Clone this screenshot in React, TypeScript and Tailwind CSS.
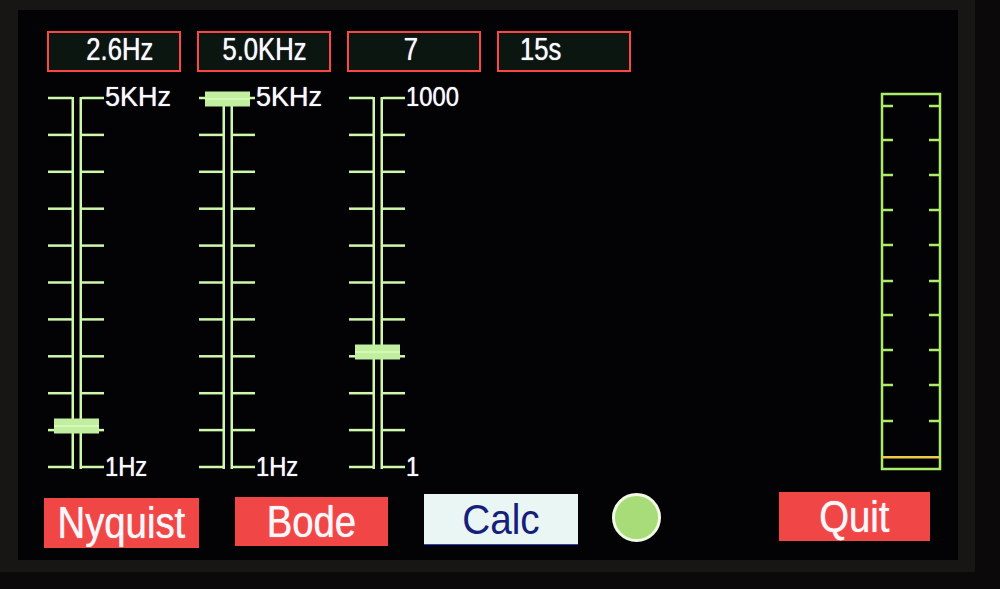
import React from "react";

const FONT = { fontFamily: '"Liberation Sans", Arial, sans-serif' };

function ValueBox({ text, pad }: { text: string; pad: string }) {
  return (
    <div
      className={`w-[134px] h-[41px] border-2 border-[#ff4646] bg-[#0c1611] flex items-center pb-[5px] ${pad}`}
    >
      <span className="inline-block text-[32px] leading-none text-[#f8f8ff] scale-x-[0.8] origin-center [text-shadow:0_0_1px_#ffffff]">
        {text}
      </span>
    </div>
  );
}

function Slider({
  top,
  bottom,
  thumbY,
  topWide,
}: {
  top: string;
  bottom: string;
  thumbY: number;
  topWide?: boolean;
}) {
  const ticks = Array.from({ length: 11 }, (_, i) => 12 + i * 36.9);
  const c = "#cef8ac";
  return (
    <div className="flex h-[392px]">
      <svg width="56" height="392" className="shrink-0">
        {ticks.map((y, i) => (
          <g key={i}>
            <rect x="0" y={y - 1.25} width="24" height="2.5" fill={c} />
            <rect x="34" y={y - 1.25} width="22" height="2.5" fill={c} />
          </g>
        ))}
        <rect x="23.5" y="11" width="2.5" height="372" fill={c} />
        <rect x="31.5" y="11" width="2.5" height="372" fill={c} />
        <rect x="6" y={thumbY - 7.5} width="45" height="15" fill="#c2eea0" />
        <rect x="6" y={thumbY - 1} width="45" height="2" fill="#d4f8b8" />
      </svg>
      <div className="flex flex-col justify-between pl-[1px]">
        <span
          className={`inline-block text-[27px] leading-[22px] text-[#f8f8ff] origin-left [text-shadow:0_0_1px_#ffffff] ${
            topWide ? "scale-x-[1]" : "scale-x-[0.88]"
          }`}
        >
          {top}
        </span>
        <span className="inline-block text-[27px] leading-[22px] text-[#f8f8ff] scale-x-[0.88] origin-left [text-shadow:0_0_1px_#ffffff]">
          {bottom}
        </span>
      </div>
    </div>
  );
}

function Gauge() {
  const g = "#acec6c";
  const ys = [14, 48, 83, 118, 153, 189, 223, 258, 293, 329];
  return (
    <svg width="62" height="380" className="shrink-0">
      <rect x="2" y="2" width="58" height="375" fill="none" stroke={g} strokeWidth="2.5" />
      {ys.map((y, i) => (
        <g key={i}>
          <rect x="2" y={y - 1.25} width="11" height="2.5" fill={g} />
          <rect x="49" y={y - 1.25} width="11" height="2.5" fill={g} />
        </g>
      ))}
      <rect x="2" y="364" width="58" height="2.5" fill="#eccb48" />
    </svg>
  );
}

function RedButton({ label, cls }: { label: string; cls: string }) {
  return (
    <div className={`bg-[#f04646] flex items-center justify-center ${cls}`}>
      <span className="inline-block text-[44px] leading-none text-[#fff6f8] scale-x-[0.87] [text-shadow:0_0_1px_#ffffff]">
        {label}
      </span>
    </div>
  );
}

export default function App() {
  return (
    <div className="w-[1000px] h-[589px] bg-[#0b0909] overflow-hidden" style={FONT}>
      <div className="w-[975px] h-[572px] bg-[#181515] pt-[10px] pl-[18px]">
        <div className="w-[940px] h-[550px] bg-[#030305] flex flex-col">
          {/* value boxes */}
          <div className="flex gap-[16px] mt-[21px] ml-[29px]">
            <ValueBox text="2.6Hz" pad="justify-center pl-[12px]" />
            <ValueBox text="5.0KHz" pad="justify-center" />
            <ValueBox text="7" pad="justify-center pr-[6px]" />
            <div className="w-[134px] h-[41px] border-2 border-[#ff4646] bg-[#0c1611] flex items-center pb-[5px] pl-[21px]">
              <span className="inline-block text-[32px] leading-none text-[#f8f8ff] scale-x-[0.8] origin-left [text-shadow:0_0_1px_#ffffff]">
                15s
              </span>
            </div>
          </div>

          {/* sliders + gauge */}
          <div className="flex mt-[14px] pr-[16px]">
            <div className="grid grid-cols-[151px_150px_auto] ml-[30px]">
              <Slider top="5KHz" bottom="1Hz" thumbY={340} topWide />
              <Slider top="5KHz" bottom="1Hz" thumbY={13} topWide />
              <Slider top="1000" bottom="1" thumbY={266} />
            </div>
            <div className="ml-auto mt-[6px]">
              <Gauge />
            </div>
          </div>

          {/* buttons */}
          <div className="flex items-start mt-[14px] ml-[26px]">
            <RedButton label="Nyquist" cls="w-[155px] h-[50px] mt-[6px]" />
            <RedButton label="Bode" cls="w-[153px] h-[49px] mt-[5px] ml-[36px]" />
            <div className="w-[154px] h-[51px] mt-[2px] ml-[36px] bg-[#eaf6f4] border-b border-[#3040c0] flex items-center justify-center">
              <span className="inline-block text-[43px] leading-none text-[#14207a] scale-x-[0.9]">
                Calc
              </span>
            </div>
            <div className="w-[49px] h-[49px] mt-[1px] ml-[34px] rounded-full bg-[#a8dc78] border-[3px] border-[#f2fae6]" />
            <RedButton label="Quit" cls="w-[151px] h-[49px] ml-[118px]" />
          </div>
        </div>
      </div>
    </div>
  );
}
